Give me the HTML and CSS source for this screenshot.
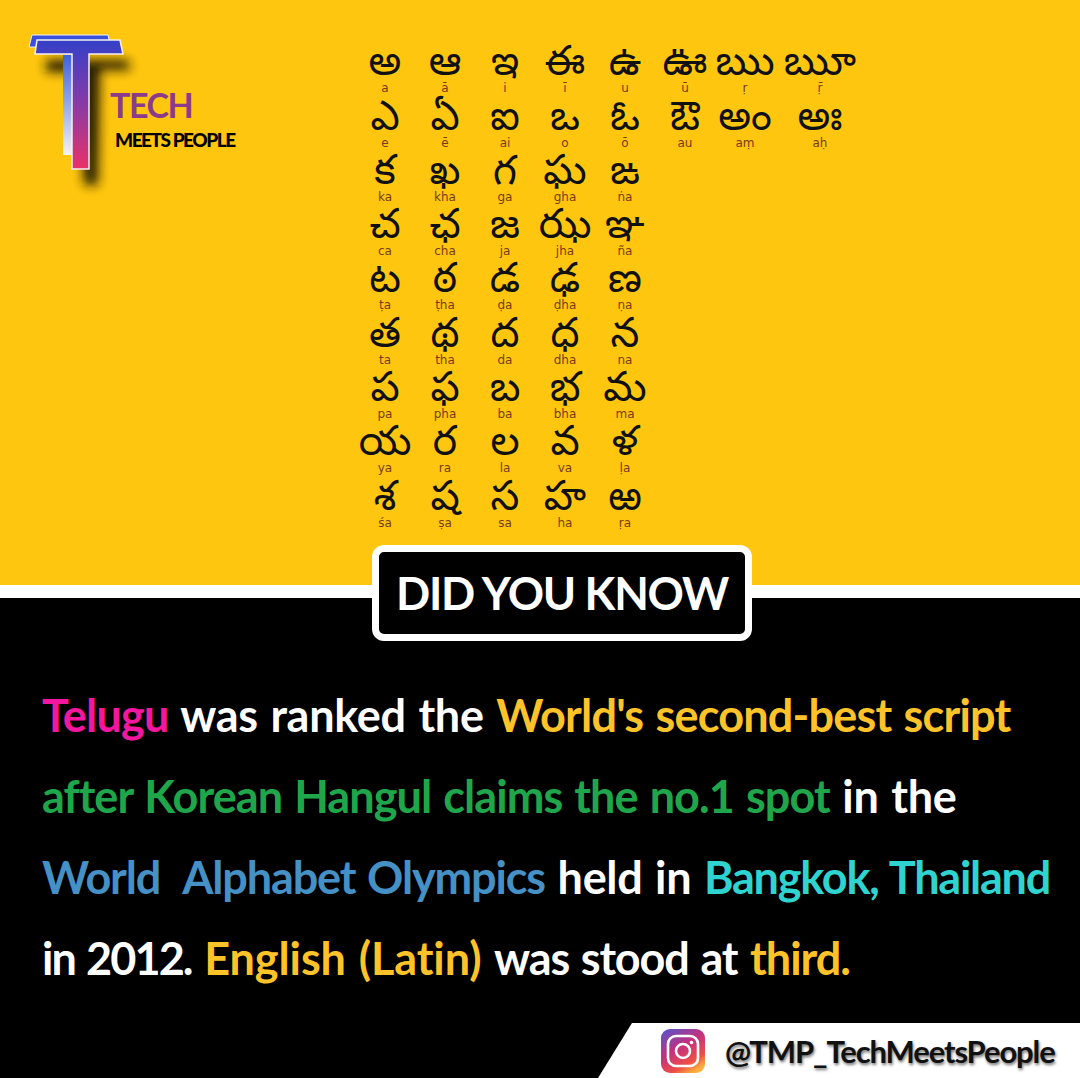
FILE: index.html
```html
<!DOCTYPE html>
<html lang="en">
<head>
<meta charset="utf-8">
<title>Did you know</title>
<link rel="stylesheet" href="styles.css">
</head>
<body>
<main class="poster">
  <section class="top">
    <div class="brand">
      <svg class="brand-mark" width="150" height="215" viewBox="0 0 150 215">
        <defs>
          <linearGradient id="frontT" gradientUnits="userSpaceOnUse" x1="0" y1="40" x2="0" y2="169"><stop offset="0" stop-color="#3340c8"/><stop offset=".5" stop-color="#8a3aa6"/><stop offset="1" stop-color="#ea3268"/></linearGradient>
          <linearGradient id="backT" x1="0" y1="0" x2="0" y2="1"><stop offset="0" stop-color="#3d62e0"/><stop offset="1" stop-color="#f4f2f2"/></linearGradient>
          <filter id="soft" x="-40%" y="-40%" width="180%" height="180%"><feGaussianBlur stdDeviation="5.5"/></filter>
        </defs>
        <path d="M46 60H128L130 70H100L98 185H84L78 72H46Z" fill="#1c1400" opacity=".95" filter="url(#soft)"/>
        <path d="M32 35H108L110 44H66V47H29Z" fill="#3a4fdc" stroke="#f2f2f2" stroke-width="1"/>
        <rect x="63" y="55" width="10" height="100" fill="url(#backT)"/>
        <path d="M37 40H120L123 54H89V169H72V54H35Z" fill="url(#frontT)" stroke="#f6f0f0" stroke-width="1.5"/>
      </svg>
      <div class="brand-text">
        <div class="brand-tech">TECH</div>
        <div class="brand-sub">MEETS PEOPLE</div>
      </div>
    </div>
    <div class="alphabet">
      <div class="letter"><b>అ</b><i>a</i></div><div class="letter"><b>ఆ</b><i>ā</i></div><div class="letter"><b>ఇ</b><i>i</i></div><div class="letter"><b>ఈ</b><i>ī</i></div><div class="letter"><b>ఉ</b><i>u</i></div><div class="letter"><b>ఊ</b><i>ū</i></div><div class="letter"><b>ఋ</b><i>ṛ</i></div><div class="letter"><b>ౠ</b><i>ṝ</i></div>
      <div class="letter"><b>ఎ</b><i>e</i></div><div class="letter"><b>ఏ</b><i>ē</i></div><div class="letter"><b>ఐ</b><i>ai</i></div><div class="letter"><b>ఒ</b><i>o</i></div><div class="letter"><b>ఓ</b><i>ō</i></div><div class="letter"><b>ఔ</b><i>au</i></div><div class="letter"><b>అం</b><i>aṃ</i></div><div class="letter"><b>అః</b><i>aḥ</i></div>
      <div class="letter"><b>క</b><i>ka</i></div><div class="letter"><b>ఖ</b><i>kha</i></div><div class="letter"><b>గ</b><i>ga</i></div><div class="letter"><b>ఘ</b><i>gha</i></div><div class="letter"><b>ఙ</b><i>ṅa</i></div><span class="fill"></span>
      <div class="letter"><b>చ</b><i>ca</i></div><div class="letter"><b>ఛ</b><i>cha</i></div><div class="letter"><b>జ</b><i>ja</i></div><div class="letter"><b>ఝ</b><i>jha</i></div><div class="letter"><b>ఞ</b><i>ña</i></div><span class="fill"></span>
      <div class="letter"><b>ట</b><i>ṭa</i></div><div class="letter"><b>ఠ</b><i>ṭha</i></div><div class="letter"><b>డ</b><i>ḍa</i></div><div class="letter"><b>ఢ</b><i>ḍha</i></div><div class="letter"><b>ణ</b><i>ṇa</i></div><span class="fill"></span>
      <div class="letter"><b>త</b><i>ta</i></div><div class="letter"><b>థ</b><i>tha</i></div><div class="letter"><b>ద</b><i>da</i></div><div class="letter"><b>ధ</b><i>dha</i></div><div class="letter"><b>న</b><i>na</i></div><span class="fill"></span>
      <div class="letter"><b>ప</b><i>pa</i></div><div class="letter"><b>ఫ</b><i>pha</i></div><div class="letter"><b>బ</b><i>ba</i></div><div class="letter"><b>భ</b><i>bha</i></div><div class="letter"><b>మ</b><i>ma</i></div><span class="fill"></span>
      <div class="letter"><b>య</b><i>ya</i></div><div class="letter"><b>ర</b><i>ra</i></div><div class="letter"><b>ల</b><i>la</i></div><div class="letter"><b>వ</b><i>va</i></div><div class="letter"><b>ళ</b><i>ḷa</i></div><span class="fill"></span>
      <div class="letter"><b>శ</b><i>śa</i></div><div class="letter"><b>ష</b><i>ṣa</i></div><div class="letter"><b>స</b><i>sa</i></div><div class="letter"><b>హ</b><i>ha</i></div><div class="letter"><b>ఱ</b><i>ṛa</i></div><span class="fill"></span>
    </div>
  </section>
  <div class="badge">DID YOU KNOW</div>
  <section class="fact">
    <p class="line"><span class="pink sp-telugu">Telugu</span> was ranked the <span class="gold sp-world">World's second-best script</span></p>
    <p class="line"><span class="green sp-after">after Korean Hangul claims the no.1 spot</span> in the</p>
    <p class="line"><span class="blue sp-olympics">World&nbsp; Alphabet Olympics</span> held in <span class="teal sp-bangkok">Bangkok, Thailand</span></p>
    <p class="line"><span class="sp-year">in 2012.</span> <span class="gold sp-latin">English (Latin)</span> <span class="sp-stood">was stood at</span> <span class="gold sp-third">third.</span></p>
  </section>
  <footer class="handle">
    <svg class="ig" width="46" height="46" viewBox="0 0 46 46">
      <defs><linearGradient id="igGrad" x1="0.1" y1="0" x2="0.7" y2="1"><stop offset="0" stop-color="#5a52c8"/><stop offset=".45" stop-color="#c4307f"/><stop offset=".8" stop-color="#ee4f46"/><stop offset="1" stop-color="#fbb03b"/></linearGradient></defs>
      <rect x="1" y="1" width="44" height="44" rx="9" fill="url(#igGrad)"/>
      <rect x="8" y="8" width="30" height="30" rx="8" fill="none" stroke="#fff" stroke-width="2.6"/>
      <circle cx="23" cy="23" r="7" fill="none" stroke="#fff" stroke-width="2.6"/>
      <circle cx="31.5" cy="14.5" r="1.8" fill="#fff"/>
    </svg>
    <span class="handle-text">@TMP_TechMeetsPeople</span>
  </footer>
</main>
</body>
</html>
```
FILE: styles.css
```css
* { box-sizing: border-box; }
html, body { margin: 0; padding: 0; }
body { background: #000; }
.poster { position: relative; width: 1080px; height: 1078px; overflow: hidden; background: #000; font-family: Lato, "Open Sans", sans-serif; }
.top { display: flex; height: 598px; background: #fec60e; border-bottom: 13px solid #fff; }
.brand { position: relative; display: flex; width: 360px; }
.brand-mark { position: absolute; left: 0; top: 0; }
.brand-text { position: relative; margin: 88px 0 0 110px; }
.brand-tech { font-size: 34px; line-height: 34px; font-weight: 700; color: #8b3a8c; letter-spacing: -1.5px; }
.brand-sub { margin: 8px 0 0 5px; font-size: 19px; line-height: 20px; font-weight: 900; color: #000; letter-spacing: -1.45px; white-space: nowrap; }
.alphabet { display: grid; grid-template-columns: repeat(7, 60px) 90px; grid-auto-rows: 54.3px; margin: 41px 0 0 -5px; align-content: start; }
.letter { display: flex; flex-direction: column; align-items: center; justify-content: flex-end; }
.letter b { font: 400 41px/30px "Noto Sans Telugu", "Noto Sans", sans-serif; color: #111; white-space: nowrap; }
.letter i { font: 400 12px/13px "DejaVu Sans", sans-serif; color: #7a3a1e; }
.fill { grid-column: span 3; }
.badge { position: absolute; left: 372px; top: 545px; width: 380px; height: 96px; display: flex; align-items: center; justify-content: center; background: #000; border: 7px solid #fff; border-radius: 12px; color: #fff; font-size: 45px; font-weight: 700; letter-spacing: -1.3px; }
.fact { padding: 77px 0 0 42px; }
.line { margin: 0; font-size: 45px; line-height: 81px; font-weight: 700; color: #fff; white-space: nowrap; letter-spacing: -.3px; word-spacing: 2px; font-variant-ligatures: none; }
.sp-telugu { letter-spacing: -.8px; }
.sp-world { letter-spacing: -.8px; }
.sp-after { letter-spacing: -.93px; }
.sp-olympics { letter-spacing: -1.15px; }
.sp-bangkok { letter-spacing: -1.25px; }
.sp-year { letter-spacing: -1.9px; }
.sp-latin { letter-spacing: -.1px; }
.sp-stood { letter-spacing: -1.15px; }
.sp-third { letter-spacing: -1px; }
.pink { color: #f3169e; }
.gold { color: #fec328; }
.green { color: #20a64a; }
.blue { color: #4590c4; }
.teal { color: #2fd3cf; }
.handle { position: absolute; left: 598px; right: 0; bottom: 0; height: 55px; display: flex; align-items: center; padding-left: 62px; background: #fff; clip-path: polygon(34px 0, 100% 0, 100% 100%, 0 100%); }
.ig { flex: none; }
.handle-text { margin-left: 19px; font-size: 31px; font-weight: 700; color: #111; letter-spacing: -1.1px; text-shadow: 1px 2px 3px rgba(0,0,0,.55); white-space: nowrap; }
```
